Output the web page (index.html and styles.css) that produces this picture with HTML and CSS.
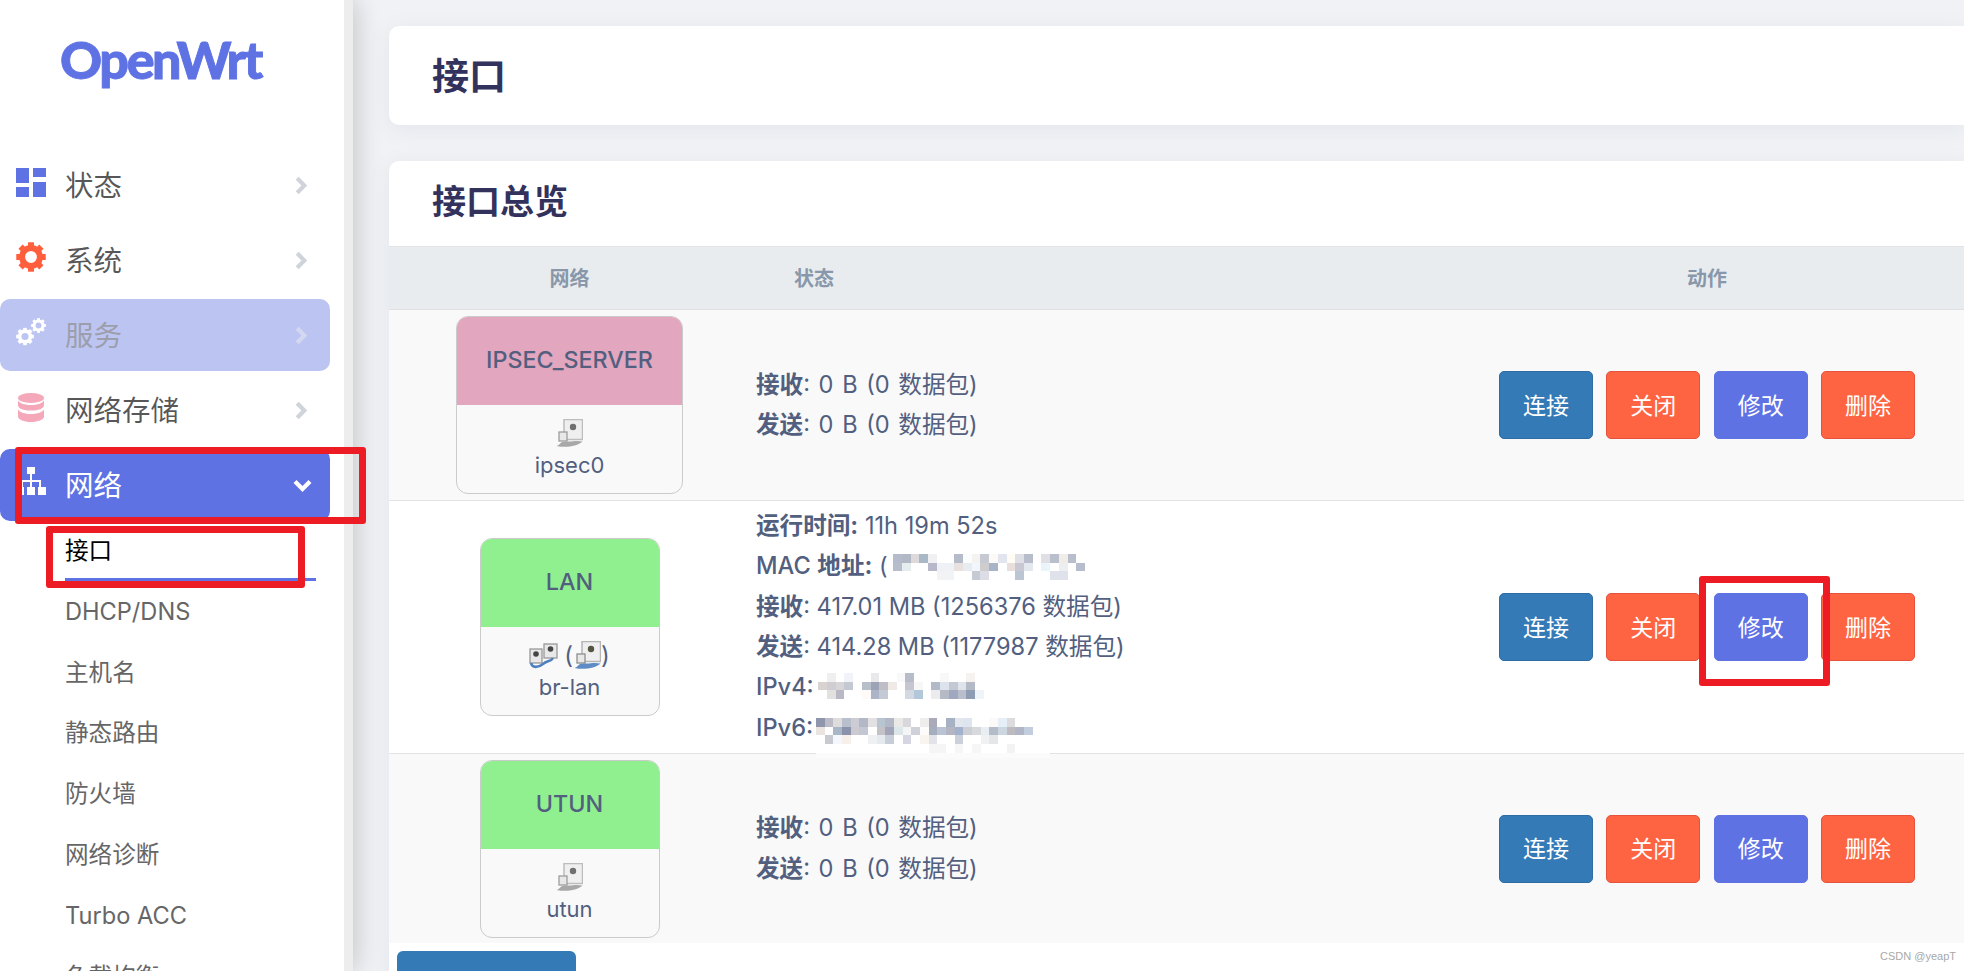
FILE: index.html
```html
<!DOCTYPE html>
<html lang="zh-CN">
<head>
<meta charset="utf-8">
<title>接口 - OpenWrt</title>
<link rel="stylesheet" href="styles.css">
</head>
<body>
<svg class="defs" width="0" height="0" aria-hidden="true">
  <symbol id="gear" viewBox="-16 -16 32 32">
    <circle r="9.5" fill="none" stroke="currentColor" stroke-width="6.4"/>
    <g fill="currentColor">
      <rect x="-3.2" y="-15.7" width="6.4" height="6"/>
      <rect x="-3.2" y="-15.7" width="6.4" height="6" transform="rotate(45)"/>
      <rect x="-3.2" y="-15.7" width="6.4" height="6" transform="rotate(90)"/>
      <rect x="-3.2" y="-15.7" width="6.4" height="6" transform="rotate(135)"/>
      <rect x="-3.2" y="-15.7" width="6.4" height="6" transform="rotate(180)"/>
      <rect x="-3.2" y="-15.7" width="6.4" height="6" transform="rotate(225)"/>
      <rect x="-3.2" y="-15.7" width="6.4" height="6" transform="rotate(270)"/>
      <rect x="-3.2" y="-15.7" width="6.4" height="6" transform="rotate(315)"/>
    </g>
  </symbol>
  <symbol id="chev-r" viewBox="0 0 12 19">
    <path d="M2.2 2.2 9.4 9.5 2.2 16.8" fill="none" stroke="currentColor" stroke-width="4.2"/>
  </symbol>
  <filter id="soft"><feGaussianBlur stdDeviation="0.5"/></filter>
  <symbol id="port-grey" viewBox="0 0 27 29">
    <g filter="url(#soft)">
      <rect x="8" y="0.500" width="18.500" height="20" fill="#efefef" stroke="#bdbdbd" stroke-width="1.500"/>
      <circle cx="17" cy="8" r="3.200" fill="#6f6f6f"/>
      <rect x="3" y="13" width="8" height="9" fill="#e8e8e8" stroke="#9d9d9d" stroke-width="1.300"/>
      <path d="M0.500 27c4-1 3-5 10-4.500 6 .5 9-1.500 16 0-5 5-17 6.500-26 4.500z" fill="#a8a8a8"/>
    </g>
  </symbol>
  <symbol id="port-blue" viewBox="0 0 27 29">
    <g filter="url(#soft)">
      <rect x="8" y="0.500" width="18.500" height="20" fill="#efefef" stroke="#b5b5b5" stroke-width="1.500"/>
      <circle cx="17" cy="8" r="3.200" fill="#55553f"/>
      <rect x="3" y="13" width="8" height="9" fill="#e8e8e8" stroke="#8e8e8e" stroke-width="1.300"/>
      <path d="M0.500 27c4-1 3-5 10-4.500 6 .5 9-1.500 16 0-5 5-17 6.500-26 4.500z" fill="#5f8cc4"/>
    </g>
  </symbol>
  <symbol id="bridge" viewBox="0 0 29 26">
    <g filter="url(#soft)">
      <rect x="1" y="6" width="12" height="14" fill="#e8e8e8" stroke="#999" stroke-width="1.300"/>
      <rect x="15" y="1" width="13" height="14" fill="#e8e8e8" stroke="#999" stroke-width="1.300"/>
      <circle cx="7" cy="11" r="2.800" fill="#444"/>
      <circle cx="21.500" cy="6" r="2.800" fill="#444"/>
      <path d="M2 20c1 5 7 5 12 1s8-2 10-6" fill="none" stroke="#4f81bf" stroke-width="2.600"/>
    </g>
  </symbol>
</svg>

<div class="page">
  <aside class="sidebar">
    <div class="logo">OpenWrt</div>
    <ul class="menu">
      <li class="menu-item">
        <span class="menu-icon">
          <svg class="icon-tiles" viewBox="0 0 30 29"><path d="M0 0h13v15H0zM0 19h13v10H0zM17 0h13v9H17zM17 14h13v15H17z"/></svg>
        </span>
        <span class="menu-label">状态</span>
        <svg class="chev"><use href="#chev-r"/></svg>
      </li>
      <li class="menu-item">
        <span class="menu-icon"><svg class="icon-gear"><use href="#gear"/></svg></span>
        <span class="menu-label">系统</span>
        <svg class="chev"><use href="#chev-r"/></svg>
      </li>
      <li class="menu-item menu-item-hover">
        <span class="menu-icon">
          <svg class="icon-cogs" viewBox="0 0 30 30">
            <use href="#gear" x="0" y="10.5" width="18" height="18"/>
            <use href="#gear" x="15" y="1" width="15" height="15"/>
          </svg>
        </span>
        <span class="menu-label">服务</span>
        <svg class="chev"><use href="#chev-r"/></svg>
      </li>
      <li class="menu-item">
        <span class="menu-icon">
          <svg class="icon-db" viewBox="0 0 26 29">
            <ellipse cx="13" cy="5" rx="13" ry="5"/>
            <path d="M0 7.500v5c0 3 6 5 13 5s13-2 13-5v-5c-2 3-7 4.500-13 4.500S2 10.500 0 7.500z"/>
            <path d="M0 16.500v7c0 3 6 5.500 13 5.500s13-2.500 13-5.500v-7c-2 3-7 4.500-13 4.500S2 19.500 0 16.500z"/>
          </svg>
        </span>
        <span class="menu-label">网络存储</span>
        <svg class="chev"><use href="#chev-r"/></svg>
      </li>
      <li class="menu-item menu-item-active">
        <span class="menu-icon menu-icon-map">
          <svg class="icon-map" viewBox="0 0 30 28"><path d="M11 0h8v7h-8zM14 7h2v6h9v7h-2v-5h-7v5h-2v-5H7v5H5v-7h9zM0 20h8v8H0zM11 20h8v8h-8zM22 20h8v8h-8z"/></svg>
        </span>
        <span class="menu-label">网络</span>
        <svg class="chev-down" viewBox="0 0 19 13"><path d="M2 2.500 9.500 10 17 2.500" fill="none" stroke="currentColor" stroke-width="4.200"/></svg>
      </li>
    </ul>
    <ul class="submenu">
      <li class="sub-item sub-item-active"><span class="sub-link">接口</span></li>
      <li class="sub-item"><span class="sub-link">DHCP/DNS</span></li>
      <li class="sub-item"><span class="sub-link">主机名</span></li>
      <li class="sub-item"><span class="sub-link">静态路由</span></li>
      <li class="sub-item"><span class="sub-link">防火墙</span></li>
      <li class="sub-item"><span class="sub-link">网络诊断</span></li>
      <li class="sub-item"><span class="sub-link">Turbo ACC</span></li>
      <li class="sub-item"><span class="sub-link">负载均衡</span></li>
    </ul>
  </aside>

  <main class="main">
    <section class="card title-card"><h2 class="page-title">接口</h2></section>
    <section class="card table-card">
      <h3 class="card-title">接口总览</h3>
      <div class="row row-head">
        <div class="th">网络</div>
        <div class="th th-status">状态</div>
        <div class="th">动作</div>
      </div>

      <div class="row row-alt row-a">
        <div class="cell-dev">
          <div class="dev">
            <div class="dev-name dev-pink">IPSEC_SERVER</div>
            <div class="dev-body"><svg class="port"><use href="#port-grey"/></svg><div>ipsec0</div></div>
          </div>
        </div>
        <div class="status status-idle">
          <div><b>接收</b>: 0 B (0 数据包)</div>
          <div><b>发送</b>: 0 B (0 数据包)</div>
        </div>
        <div class="actions">
          <span class="btn btn-blue">连接</span><span class="btn btn-red">关闭</span><span class="btn btn-indigo">修改</span><span class="btn btn-red">删除</span>
        </div>
      </div>

      <div class="row row-b">
        <div class="cell-dev">
          <div class="dev">
            <div class="dev-name dev-green dev-name-lan">LAN</div>
            <div class="dev-body">
              <div class="dev-ports"><svg class="port-bridge"><use href="#bridge"/></svg> (<svg class="port"><use href="#port-blue"/></svg>)</div>
              <div>br-lan</div>
            </div>
          </div>
        </div>
        <div class="status">
          <div><b>运行时间:</b> 11h 19m 52s</div>
          <div class="masked"><b class="medium">MAC</b> <b>地址:</b> (
            <svg class="mosaic mosaic-mac" width="205" height="27" viewBox="0 0 23 3.100" shape-rendering="crispEdges">
              <rect x="0" y="0" fill="#b4bccb"/><rect x="1" y="0" fill="#b3b8c6"/><rect x="2" y="0" fill="#ded9da"/><rect x="3" y="0" fill="#a9b8c6"/><rect x="4" y="0" fill="#f0f0f2"/><rect x="7" y="0" fill="#b6bbc9"/><rect x="8" y="0" fill="#fbfcfd"/><rect x="9" y="0" fill="#f5f3f0"/><rect x="10" y="0" fill="#c6c9d2"/><rect x="11" y="0" fill="#fbfaf7"/><rect x="12" y="0" fill="#e2e5ee"/><rect x="13" y="0" fill="#fefcf5"/><rect x="14" y="0" fill="#dfdfe6"/><rect x="15" y="0" fill="#b8bdcb"/><rect x="17" y="0" fill="#dfdfe5"/><rect x="18" y="0" fill="#babfcd"/><rect x="19" y="0" fill="#f0ece8"/><rect x="20" y="0" fill="#b9becc"/>
              <rect x="0" y="1" fill="#b7bdcb"/><rect x="1" y="1" fill="#e6edef"/><rect x="2" y="1" fill="#fff"/><rect x="3" y="1" fill="#fff"/><rect x="4" y="1" fill="#b7b9ca"/><rect x="5" y="1" fill="#f0f1f4"/><rect x="6" y="1" fill="#eef1f6"/><rect x="7" y="1" fill="#e8e1df"/><rect x="8" y="1" fill="#e8ebf0"/><rect x="9" y="1" fill="#f1f6fc"/><rect x="10" y="1" fill="#cfccce"/><rect x="11" y="1" fill="#aab4c8"/><rect x="13" y="1" fill="#e8dfdc"/><rect x="14" y="1" fill="#c9c8d2"/><rect x="15" y="1" fill="#e2e8ee"/><rect x="17" y="1" fill="#e9f5fb"/><rect x="19" y="1" fill="#eceef0"/><rect x="21" y="1" fill="#b6bdcc"/>
              <rect x="5" y="2" fill="#f2f3f5"/><rect x="6" y="2" fill="#f2f3f5"/><rect x="9" y="2" fill="#c5cad3"/><rect x="10" y="2" fill="#dcdde6"/><rect x="14" y="2" fill="#bcc5d3"/><rect x="18" y="2" fill="#dfe2ea"/><rect x="19" y="2" fill="#dfe2ea"/>
            </svg>
          </div>
          <div><b>接收</b>: 417.01 MB (1256376 数据包)</div>
          <div><b>发送</b>: 414.28 MB (1177987 数据包)</div>
          <div class="masked"><b class="medium">IPv4:</b>
            <svg class="mosaic mosaic-v4" width="170" height="27" viewBox="0 0 19 3.100" shape-rendering="crispEdges">
              <rect x="1" y="0" fill="#f0eff0"/><rect x="3" y="0" fill="#f0f4fa"/><rect x="6" y="0" fill="#e9e9ec"/><rect x="9" y="0" fill="#f9f9f9"/><rect x="10" y="0" fill="#b8bcc8"/><rect x="14" y="0" fill="#f8f8f8"/><rect x="17" y="0" fill="#f6f2ef"/>
              <rect x="0" y="1" fill="#d8d2d0"/><rect x="1" y="1" fill="#cfccd2"/><rect x="2" y="1" fill="#d7d5d8"/><rect x="3" y="1" fill="#c3c8d2"/><rect x="5" y="1" fill="#b7c0ca"/><rect x="6" y="1" fill="#9da3b6"/><rect x="7" y="1" fill="#bfbec7"/><rect x="8" y="1" fill="#efeae6"/><rect x="10" y="1" fill="#c5c6cf"/><rect x="11" y="1" fill="#f7f7f7"/><rect x="13" y="1" fill="#b3b9c7"/><rect x="14" y="1" fill="#dce3ec"/><rect x="15" y="1" fill="#c3c8d3"/><rect x="16" y="1" fill="#dfe4ea"/><rect x="17" y="1" fill="#b3bac6"/>
              <rect x="1" y="2" fill="#e3e0e0"/><rect x="2" y="2" fill="#b8b9c4"/><rect x="5" y="2" fill="#fdfaf7"/><rect x="6" y="2" fill="#acb4c7"/><rect x="7" y="2" fill="#c3c9d5"/><rect x="10" y="2" fill="#d2d9e2"/><rect x="11" y="2" fill="#b2c7d8"/><rect x="13" y="2" fill="#ececee"/><rect x="14" y="2" fill="#b6b9c6"/><rect x="15" y="2" fill="#a0a8bf"/><rect x="16" y="2" fill="#babdcc"/><rect x="17" y="2" fill="#8f9db4"/><rect x="18" y="2" fill="#eef4fa"/>
            </svg>
          </div>
          <div class="masked"><b class="medium">IPv6:</b>
            <svg class="mosaic mosaic-v6" width="234" height="40" viewBox="0 0 27 4.600" shape-rendering="crispEdges">
              <rect x="0" y="0" fill="#8f95ad"/><rect x="1" y="0" fill="#bcbcc6"/><rect x="2" y="0" fill="#e0dcdd"/><rect x="3" y="0" fill="#b8c0cd"/><rect x="4" y="0" fill="#cccdd4"/><rect x="5" y="0" fill="#b4b8c6"/><rect x="6" y="0" fill="#e2e0e2"/><rect x="7" y="0" fill="#b8c4d0"/><rect x="8" y="0" fill="#b3b8c6"/><rect x="9" y="0" fill="#ebe9e8"/><rect x="10" y="0" fill="#d8d8dc"/><rect x="12" y="0" fill="#efedeb"/><rect x="13" y="0" fill="#a9aaba"/><rect x="15" y="0" fill="#a6b2c3"/><rect x="16" y="0" fill="#e2e7ee"/><rect x="17" y="0" fill="#dfe5ee"/><rect x="20" y="0" fill="#fcfaf8"/><rect x="21" y="0" fill="#e6eff7"/><rect x="22" y="0" fill="#dedbdf"/>
              <rect x="0" y="1" fill="#eae3e0"/><rect x="2" y="1" fill="#a9b6c8"/><rect x="3" y="1" fill="#8b93ac"/><rect x="4" y="1" fill="#cccad0"/><rect x="5" y="1" fill="#c2c7d3"/><rect x="7" y="1" fill="#c5c2c7"/><rect x="8" y="1" fill="#a2a5b9"/><rect x="9" y="1" fill="#dde6e8"/><rect x="10" y="1" fill="#f5f5f5"/><rect x="11" y="1" fill="#cfd1d9"/><rect x="12" y="1" fill="#fdfcfa"/><rect x="13" y="1" fill="#a5aebc"/><rect x="14" y="1" fill="#b9c3d3"/><rect x="15" y="1" fill="#b3b5c2"/><rect x="16" y="1" fill="#a3b2cc"/><rect x="17" y="1" fill="#ccd0d6"/><rect x="18" y="1" fill="#d8d9dc"/><rect x="19" y="1" fill="#e8eef2"/><rect x="20" y="1" fill="#b3bcc8"/><rect x="21" y="1" fill="#ccd6e0"/><rect x="22" y="1" fill="#bdbac0"/><rect x="23" y="1" fill="#b0b6c5"/><rect x="24" y="1" fill="#c2cede"/>
              <rect x="1" y="2" fill="#c9cad0"/><rect x="2" y="2" fill="#f4f8fc"/><rect x="3" y="2" fill="#f7f0ea"/><rect x="6" y="2" fill="#eff0f2"/><rect x="7" y="2" fill="#e5e9f0"/><rect x="8" y="2" fill="#c8ced8"/><rect x="10" y="2" fill="#d5d6e2"/><rect x="12" y="2" fill="#faf4ee"/><rect x="13" y="2" fill="#e2e3e8"/><rect x="16" y="2" fill="#ccd0da"/><rect x="19" y="2" fill="#eff1f3"/><rect x="20" y="2" fill="#e3e7ea"/>
              <rect x="13" y="3" fill="#f5f5f5"/><rect x="14" y="3" fill="#f5f5f5"/><rect x="16" y="3" fill="#f6f6f6"/><rect x="18" y="3" fill="#f6f6f6"/><rect x="22" y="3" fill="#f3f3f3"/>
              <path d="M0 4h27v.600H0z" fill="#fbfbfb"/>
            </svg>
          </div>
        </div>
        <div class="actions">
          <span class="btn btn-blue">连接</span><span class="btn btn-red">关闭</span><span class="btn btn-indigo">修改</span><span class="btn btn-red">删除</span>
        </div>
      </div>

      <div class="row row-alt row-a row-last">
        <div class="cell-dev">
          <div class="dev">
            <div class="dev-name dev-green">UTUN</div>
            <div class="dev-body"><svg class="port"><use href="#port-grey"/></svg><div>utun</div></div>
          </div>
        </div>
        <div class="status status-idle">
          <div><b>接收</b>: 0 B (0 数据包)</div>
          <div><b>发送</b>: 0 B (0 数据包)</div>
        </div>
        <div class="actions">
          <span class="btn btn-blue">连接</span><span class="btn btn-red">关闭</span><span class="btn btn-indigo">修改</span><span class="btn btn-red">删除</span>
        </div>
      </div>
      <div class="add-btn"></div>
    </section>
  </main>

  <div class="mark mark-menu"></div>
  <div class="mark mark-sub"></div>
  <div class="mark mark-btn"></div>
  <div class="watermark">CSDN @yeapT</div>
</div>
</body>
</html>
```

FILE: styles.css
```css
* { box-sizing: border-box; }
html, body { margin: 0; height: 100%; overflow: hidden; }
body {
  font-family: Inter, "Noto Sans CJK SC", sans-serif;
  color: #525f7f;
  background: #f0f2f5;
}
.defs { position: absolute; }
ul { list-style: none; margin: 0; padding: 0; }

.page { position: relative; display: flex; height: 971px; overflow: hidden; }

/* sidebar */
.sidebar {
  position: relative;
  z-index: 2;
  flex: 0 0 353px;
  background: #fff;
  border-right: 9px solid #ededed;
  box-shadow: 2px 0 26px rgba(0, 0, 0, .2);
}
.logo {
  height: 149px;
  padding: 23px 0 0 60px;
  font-family: Lato, sans-serif;
  font-weight: 900;
  font-size: 52px;
  line-height: 72px;
  letter-spacing: -2.4px;
  -webkit-text-stroke: .9px #5e72e4;
  color: #5e72e4;
}
.menu { display: flex; flex-direction: column; gap: 3px; }
.menu-item {
  display: flex;
  align-items: center;
  height: 72px;
  width: 330px;
  padding: 0 23px 0 16px;
  border-radius: 0 10px 10px 0;
  font-size: 28.5px;
  color: rgba(0, 0, 0, .66);
}
.menu-icon { display: flex; justify-content: center; align-items: center; flex: 0 0 30px; margin: 0 19px 6px 0; }
.menu-icon-map { margin-bottom: 8px; }
.menu-icon svg { display: block; fill: currentColor; }
.menu-label { flex: 1; padding-bottom: 4px; }
.chev { width: 12px; height: 19px; color: #ced4da; flex: none; }
.chev-down { width: 19px; height: 13px; color: #fff; margin-right: -5px; flex: none; }
.icon-tiles { width: 30px; height: 29px; color: #5e72e4; }
.icon-gear { width: 30px; height: 30px; color: #ff5f3d; }
.icon-cogs { width: 30px; height: 30px; color: #fff; }
.icon-db { width: 26px; height: 29px; color: #f5a8ba; }
.icon-map { width: 30px; height: 28px; color: #fff; }
.menu-item-hover { background: #bcc5f2; color: #9c9eac; border-radius: 10px; }
.menu-item-hover .chev { color: #d3d8f0; }
.menu-item-active { background: #5e72e4; color: #fff; border-radius: 10px; }

.sub-item { height: 60.8px; padding: 0 28px 0 65px; font-size: 23.6px; color: #666; }
.sub-link { display: block; height: 60px; line-height: 60px; }
.sub-item-active { color: #000; }
.sub-item-active .sub-link { border-bottom: 3px solid #5e72e4; }

/* main */
.main { flex: 1; min-width: 0; padding: 26px 0 0 36px; }
.card { background: #fff; border-radius: 10px 0 0 10px; box-shadow: 0 4px 20px rgba(136, 152, 170, .12); }
.title-card { height: 99px; display: flex; align-items: center; padding: 0 0 4px 43px; }
.page-title { margin: 0; font-size: 37px; font-weight: 700; color: #32325d; }
.table-card { margin-top: 36px; border-radius: 10px 0 0 0; height: 900px; }
.card-title {
  margin: 0;
  height: 85px;
  line-height: 82px;
  padding-left: 43px;
  font-size: 34px;
  font-weight: 700;
  color: #32325d;
}
.row {
  display: grid;
  grid-template-columns: 361px 1fr 438px 38px;
  align-items: center;
  border-top: 1px solid #e2e3e5;
}
.row-head { height: 64px; background: #e9ecef; border-bottom: 1px solid #dfe1e4; }
.th { text-align: center; font-size: 20px; font-weight: 700; color: #8898aa; padding-bottom: 2px; }
.th-status { text-align: left; padding-left: 44px; }
.row-head + .row { border-top: 0; }
.row-alt { background: #f9f9f9; }
.row-a { height: 190px; }
.row-b { height: 253px; }
.row-last { border-top: 1px solid #e2e3e5; }
.cell-dev { display: flex; justify-content: center; }
.dev {
  min-width: 180px;
  height: 178px;
  border: 1px solid #cbcbcb;
  border-radius: 12px;
  background: #f9f9f9;
  overflow: hidden;
  text-align: center;
}
.dev-name {
  height: 88px;
  padding: 0 29px;
  line-height: 86px;
  font-size: 23.3px;
  font-weight: 500;
}
.dev-pink { background: #e2a6be; }
.dev-green { background: #90f090; }
.dev-body { padding-top: 14px; font-size: 22px; line-height: 34px; }
.port { display: block; width: 27px; height: 29px; margin: 0 auto; }
.dev-ports { display: flex; justify-content: center; align-items: center; height: 29px; font-size: 24px; }
.dev-ports .port { margin: 0 0 0 1px; }
.port-bridge { width: 29px; height: 26px; margin-right: 6px; }

.status { padding-left: 6px; font-size: 23.6px; line-height: 40.4px; }
.status-idle { word-spacing: 2px; }
.status b { font-weight: 700; }
.status b.medium { font-weight: 500; }
.masked { position: relative; }
.mosaic { position: absolute; }
.mosaic rect { width: 1px; height: 1px; }
.mosaic-mac { left: 135px; top: 8px; }
.mosaic-v4 { left: 60px; top: 6px; }
.mosaic-v6 { left: 60px; top: 10px; }

.actions { display: flex; justify-content: center; gap: 13.3px; }
.btn {
  display: flex;
  align-items: center;
  justify-content: center;
  width: 94px;
  height: 68px;
  padding-bottom: 3px;
  border: 1px solid;
  border-radius: 5px;
  font-size: 23px;
  color: #fff;
}
.btn-blue { background: #337ab7; border-color: #2e6da4; }
.btn-red { background: #ff6442; border-color: #e5533d; }
.btn-indigo { background: #5e72e4; border-color: #5e72e4; }

.add-btn { width: 179px; height: 60px; margin: 8px 0 0 8px; background: #337ab7; border-radius: 6px; }

/* annotations drawn over the page */
.mark { position: absolute; z-index: 3; border: 7px solid #ed1c24; border-radius: 3px; }
.mark-menu { left: 15px; top: 447px; width: 351px; height: 77px; }
.mark-sub { left: 46px; top: 526px; width: 259px; height: 62px; }
.mark-btn { left: 1699px; top: 576px; width: 131px; height: 110px; }
.watermark {
  position: absolute;
  z-index: 3;
  left: 1880px;
  top: 949px;
  font-family: "Liberation Sans", sans-serif;
  font-size: 11px;
  line-height: 14px;
  color: #a8a8a8;
}
```
